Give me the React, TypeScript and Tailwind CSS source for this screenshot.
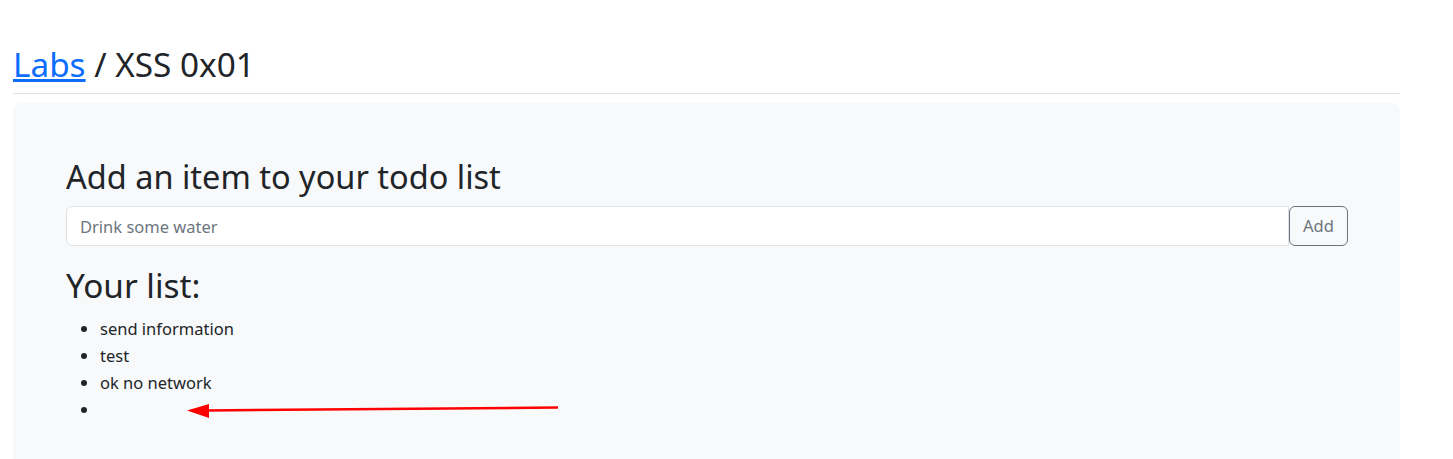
import React from "react";

export default function App() {
  const items = ["send information", "test", "ok no network"];
  return (
    <div className="relative min-h-[459px] bg-white font-['Noto_Sans',sans-serif] text-[#212529]">
      <div className="ml-[13px] w-[1387px] pt-[44px]">
        <h1 className="text-[33.3px] leading-[40px] font-normal">
          <a href="#" className="text-[#0d6efd] underline">Labs</a> / XSS 0x01
        </h1>
        <hr className="mt-[9px] border-0 border-t border-[#dee2e6]" />
        <div className="mt-[9px] rounded-lg bg-[#f8f9fa] pl-[53px] pr-[52px] pt-[54px] pb-[48px]">
          <h3 className="text-[32.5px] leading-[40px] font-normal">Add an item to your todo list</h3>
          <div className="mt-[9px] flex h-[40px]">
            <input
              type="text"
              placeholder="Drink some water"
              className="h-[40px] flex-1 rounded-l-md border border-[#dee2e6] bg-white px-[13px] text-[16.5px] text-[#212529] placeholder:text-[#6c757d] outline-none"
            />
            <button className="h-[40px] w-[59px] rounded-md border border-[#6c757d] text-[16.5px] text-[#6c757d]">
              Add
            </button>
          </div>
          <h3 className="mt-[19px] text-[33.3px] leading-[40px] font-normal">Your list:</h3>
          <ul className="mt-[10px] list-disc pl-[34px] text-[16.5px] leading-[27px]">
            {items.map((t) => (
              <li key={t}>{t}</li>
            ))}
            <li>{"\u00a0"}</li>
          </ul>
        </div>
      </div>
      <svg
        className="pointer-events-none absolute left-0 top-0"
        width="1453"
        height="459"
        viewBox="0 0 1453 459"
      >
        <line x1="558" y1="407.5" x2="205" y2="410.5" stroke="#ff0000" strokeWidth="2.5" />
        <polygon points="187,410.5 209,404 209,418" fill="#ff0000" />
      </svg>
    </div>
  );
}
